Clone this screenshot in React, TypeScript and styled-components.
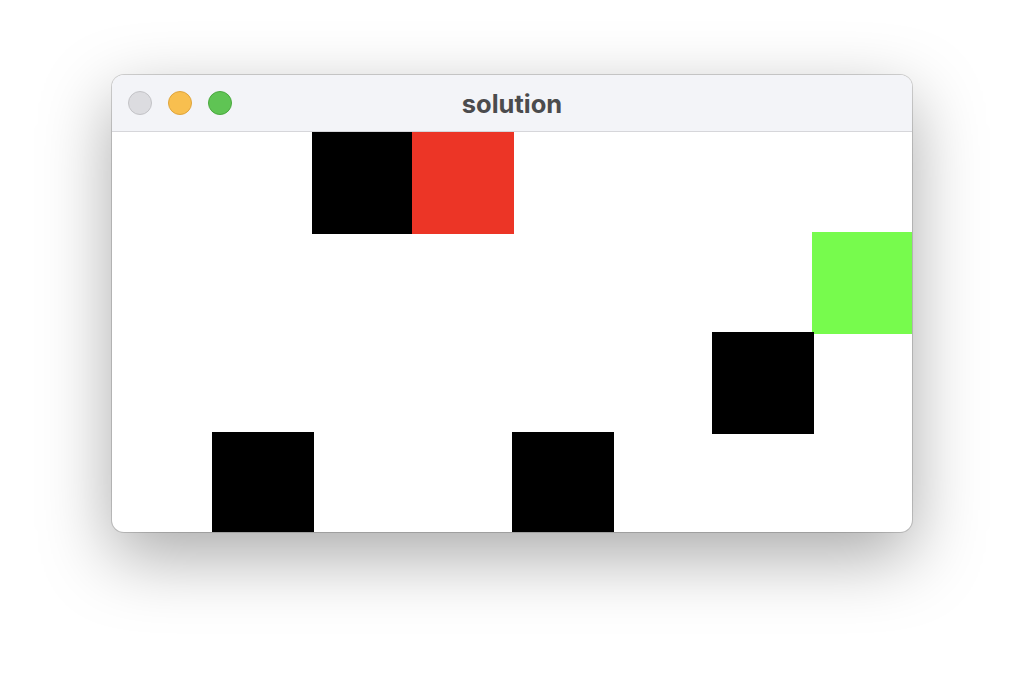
import React from "react"
import styled, { createGlobalStyle } from "styled-components"

const GlobalStyle = createGlobalStyle`
  html, body {
    margin: 0;
    padding: 0;
    background: #ffffff;
    font-family: Inter, "Liberation Sans", sans-serif;
  }
`

const Page = styled.div`
  width: 1024px;
  height: 680px;
  display: flex;
  justify-content: center;
  align-items: flex-start;
  padding-top: 75px;
  box-sizing: border-box;
`

const Window = styled.div`
  width: 800px;
  border-radius: 12px;
  overflow: hidden;
  background: #ffffff;
  box-shadow: 0 0 0 1px rgba(0, 0, 0, 0.16), 0 24px 70px rgba(0, 0, 0, 0.34);
`

const TitleBar = styled.div`
  height: 56px;
  background: #f3f4f8;
  border-bottom: 1px solid #d6d6da;
  display: flex;
  align-items: center;
  padding-left: 16px;
  position: relative;
`

const Lights = styled.div`
  display: flex;
  gap: 16px;
`

const Light = styled.span<{ fill: string; edge: string }>`
  width: 22px;
  height: 22px;
  border-radius: 50%;
  background: ${(p) => p.fill};
  border: 1px solid ${(p) => p.edge};
`

const Title = styled.div`
  position: absolute;
  left: 0;
  right: 0;
  text-align: center;
  font-size: 25.5px;
  font-weight: 700;
  color: #4b4b4d;
  pointer-events: none;
`

const Board = styled.div`
  display: grid;
  grid-template-columns: repeat(8, 100px);
  grid-template-rows: repeat(4, 100px);
  overflow: hidden;
`

const Tile = styled.div<{ col: number; row: number; color: string }>`
  grid-column: ${(p) => p.col + 1};
  grid-row: ${(p) => p.row + 1};
  width: 102px;
  height: 102px;
  background: ${(p) => p.color};
`

const tiles = [
  { col: 2, row: 0, color: "#000000" },
  { col: 3, row: 0, color: "#ec3526" },
  { col: 7, row: 1, color: "#77fb4d" },
  { col: 6, row: 2, color: "#000000" },
  { col: 1, row: 3, color: "#000000" },
  { col: 4, row: 3, color: "#000000" },
]

const App: React.FC = () => {
  return (
    <>
      <GlobalStyle />
      <Page>
        <Window>
          <TitleBar>
            <Lights>
              <Light fill="#dcdce0" edge="#c3c3c7" />
              <Light fill="#f8bf4f" edge="#dfa43c" />
              <Light fill="#5fc454" edge="#4aa83f" />
            </Lights>
            <Title>solution</Title>
          </TitleBar>
          <Board>
            {tiles.map((t, i) => (
              <Tile key={i} col={t.col} row={t.row} color={t.color} />
            ))}
          </Board>
        </Window>
      </Page>
    </>
  )
}

export default App
